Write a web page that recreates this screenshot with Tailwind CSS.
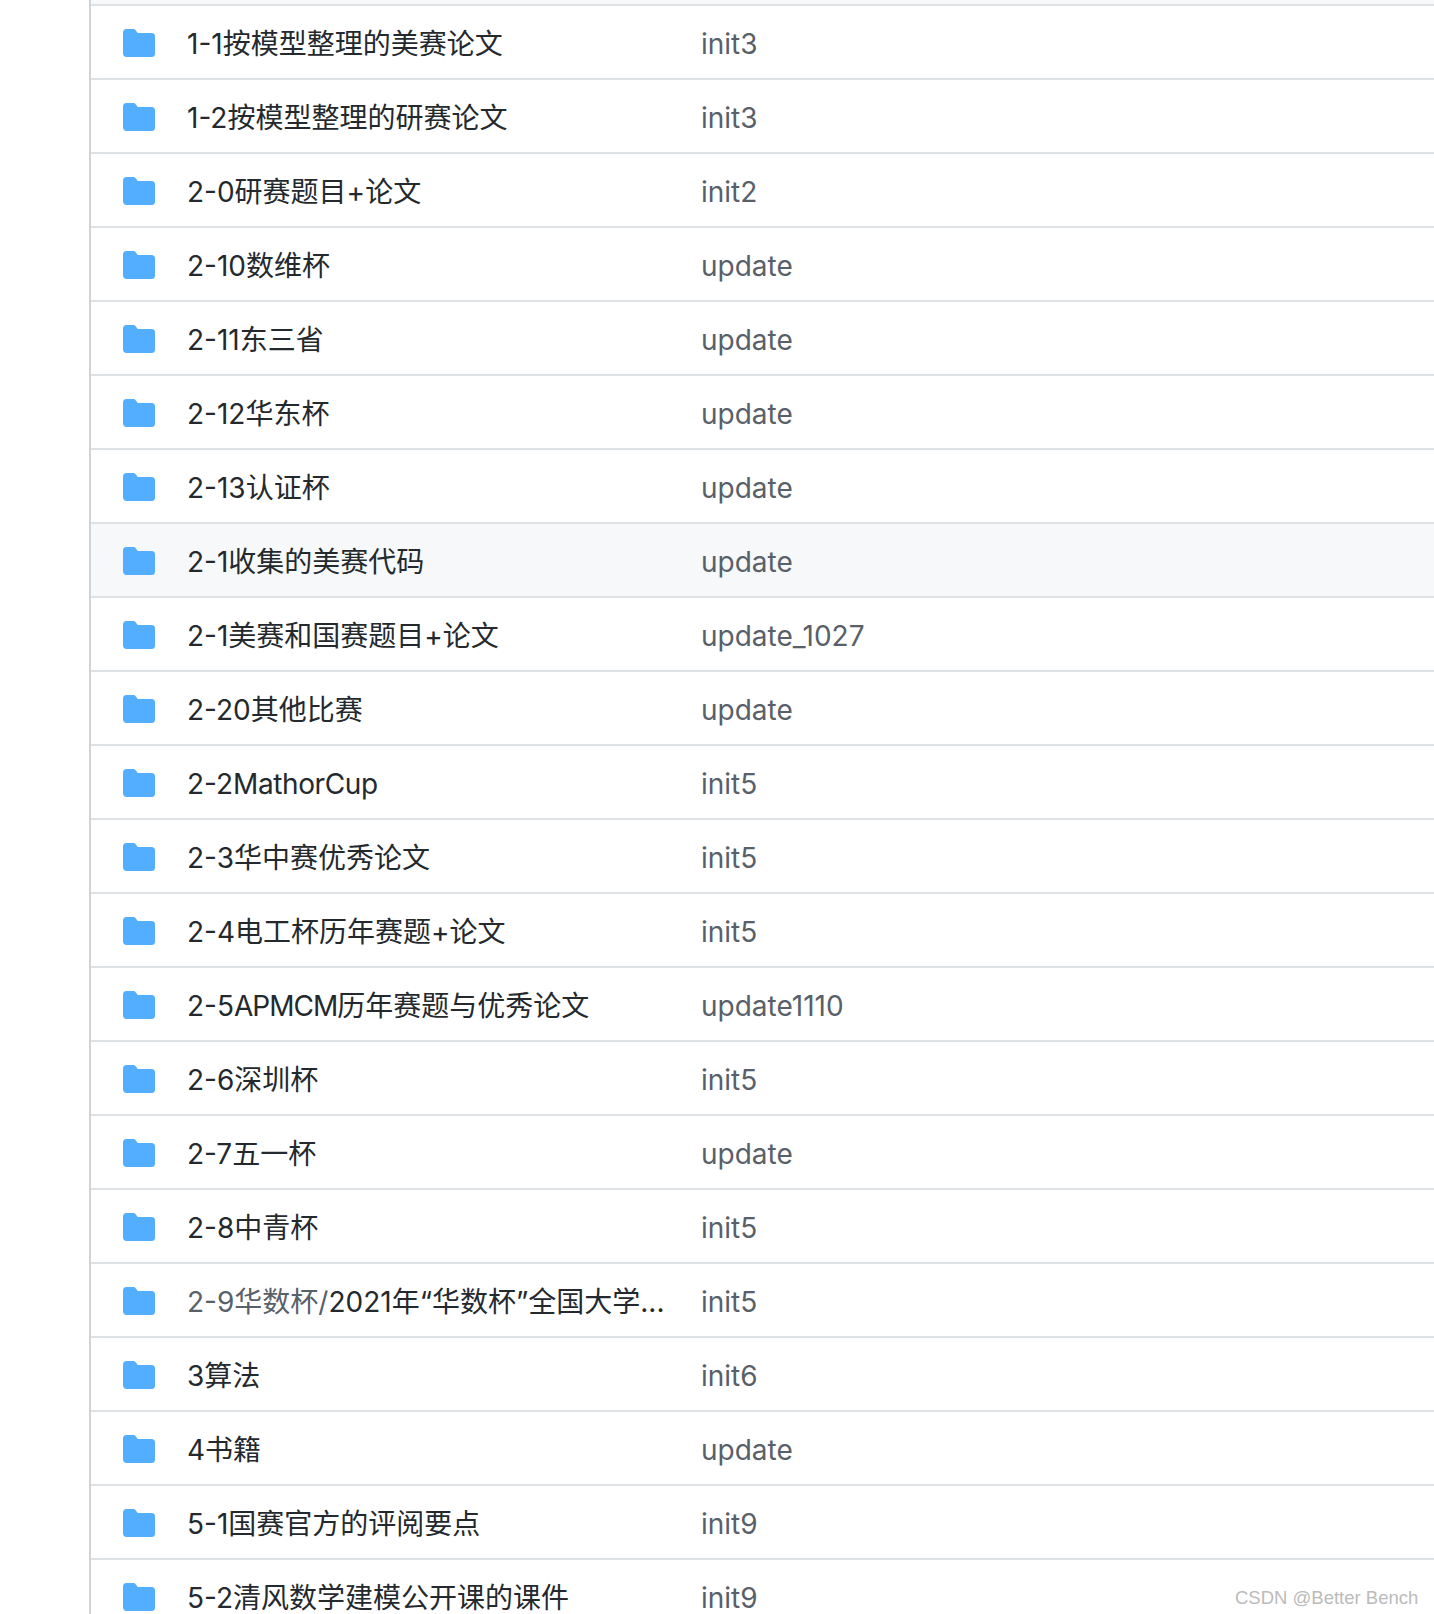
<!DOCTYPE html>
<html lang="en">
<head>
    <meta charset="UTF-8">
    <title>Repository files</title>
    <script src="https://cdn.jsdelivr.net/npm/@tailwindcss/browser@4"></script>
</head>
<body class="bg-white overflow-hidden h-[1614px] font-['Inter','Noto_Sans_CJK_SC',sans-serif] text-[28px] text-[#24292e]">
    <div class="ml-[89px] relative h-[1614px] overflow-hidden border-l-2 border-[#d1d5da]">
        <div class="h-[4px] bg-[#f6f8fa]"></div>
        <div id="rows" class="border-t-2 border-[#dfe2e5]"></div>
    </div>
    <div class="absolute left-[1235px] top-[1586px] whitespace-nowrap font-['Liberation_Sans',sans-serif] text-[18.5px] leading-[24px] text-[#bbbbbb]">CSDN @Better Bench</div>

    <script>
        // name, last commit message
        const files = [
            ['1-1按模型整理的美赛论文', 'init3'],
            ['1-2按模型整理的研赛论文', 'init3'],
            ['2-0研赛题目+论文', 'init2'],
            ['2-10数维杯', 'update'],
            ['2-11东三省', 'update'],
            ['2-12华东杯', 'update'],
            ['2-13认证杯', 'update'],
            ['2-1收集的美赛代码', 'update'],
            ['2-1美赛和国赛题目+论文', 'update_1027'],
            ['2-20其他比赛', 'update'],
            ['2-2<span class="tracking-[-0.4px]">MathorCup</span>', 'init5'],
            ['2-3华中赛优秀论文', 'init5'],
            ['2-4电工杯历年赛题+论文', 'init5'],
            ['2-5<span class="tracking-[-1px]">APMCM</span>历年赛题与优秀论文', 'update1110'],
            ['2-6深圳杯', 'init5'],
            ['2-7五一杯', 'update'],
            ['2-8中青杯', 'init5'],
            ['<span class="text-[#586069]">2-9华数杯/</span>2021年“华数杯”全国大学...', 'init5'],
            ['3算法', 'init6'],
            ['4书籍', 'update'],
            ['5-1国赛官方的评阅要点', 'init9'],
            ['5-2清风数学建模公开课的课件', 'init9'],
        ];
        const folder = '<svg viewBox="0 0 16 16" class="w-8 h-8 shrink-0 fill-[#54aeff]"><path d="M1.75 1A1.75 1.75 0 000 2.75v10.5C0 14.216.784 15 1.75 15h12.5A1.75 1.75 0 0016 13.25v-8.5A1.75 1.75 0 0014.25 3H7.5a.25.25 0 01-.2-.1l-.9-1.2C6.07 1.22 5.55 1 5 1H1.75z"></path></svg>';
        document.getElementById('rows').innerHTML = files.map(([name, msg], i) => `
            <div class="flex items-center h-[74px] pt-[2px] pl-[32px] border-b-2 border-[#dfe2e5] ${i === 7 ? 'bg-[#f6f8fa]' : ''}">
                ${folder}
                <div class="ml-8 pt-[2px] w-[482px] shrink-0 whitespace-nowrap">${name}</div>
                <div class="ml-[32px] pt-[2px] text-[#586069]">${msg}</div>
            </div>`).join('');
    </script>
</body>
</html>
